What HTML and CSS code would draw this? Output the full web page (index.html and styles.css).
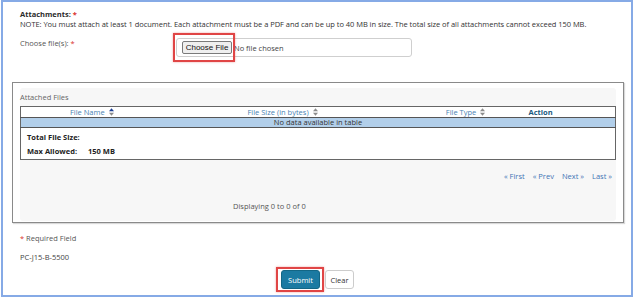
FILE: index.html
```html
<!DOCTYPE html>
<html lang="en">
<head>
    <meta charset="UTF-8">
    <meta name="viewport" content="width=device-width, initial-scale=1.0">
    <title>Attachments</title>
    <link rel="stylesheet" href="styles.css">
</head>
<body>
    <div class="frame">
        <div class="form">
            <div class="field-title">Attachments: <span class="req">*</span></div>
            <div class="note">NOTE: You must attach at least 1 document. Each attachment must be a PDF and can be up to 40 MB in size. The total size of all attachments cannot exceed 150 MB.</div>
            <div class="choose-row">
                <label class="choose-label">Choose file(s): <span class="req">*</span></label>
                <div class="file-input">
                    <span class="file-btn">Choose File</span>
                    <span class="file-status">No file chosen</span>
                    <span class="hl-file"></span>
                </div>
            </div>
        </div>

        <div class="files-box">
            <div class="files-panel">
                <div class="caption">Attached Files</div>
                <table class="files-table">
                    <colgroup>
                        <col class="c1"><col class="c2"><col class="c3"><col class="c4">
                    </colgroup>
                    <thead>
                        <tr>
                            <th>File Name <svg class="sort" viewBox="0 0 6 9"><path d="M3 0 L6 3.5 H0 Z" fill="#1b3f94"/><path d="M0 5.5 H6 L3 9 Z" fill="#8c8c8c"/></svg></th>
                            <th>File Size (in bytes) <svg class="sort" viewBox="0 0 6 9"><path d="M3 0 L6 3.5 H0 Z" fill="#8c8c8c"/><path d="M0 5.5 H6 L3 9 Z" fill="#8c8c8c"/></svg></th>
                            <th>File Type <svg class="sort" viewBox="0 0 6 9"><path d="M3 0 L6 3.5 H0 Z" fill="#8c8c8c"/><path d="M0 5.5 H6 L3 9 Z" fill="#8c8c8c"/></svg></th>
                            <th class="action">Action</th>
                        </tr>
                    </thead>
                    <tbody>
                        <tr class="empty"><td colspan="4">No data available in table</td></tr>
                        <tr class="totals">
                            <td colspan="4">
                                <div class="total-line"><b>Total File Size:</b></div>
                                <div class="total-line"><b>Max Allowed:</b><span class="max">150 MB</span></div>
                            </td>
                        </tr>
                    </tbody>
                </table>
                <div class="pager">
                    <a>« First</a><a>« Prev</a><a>Next »</a><a>Last »</a>
                </div>
                <div class="displaying">Displaying 0 to 0 of 0</div>
            </div>
        </div>

        <div class="form footer">
            <div class="required"><span class="req">*</span> Required Field</div>
            <div class="code">PC-J15-B-5500</div>
            <div class="actions">
                <span class="hl-submit"><button class="btn-submit">Submit</button></span>
                <button class="btn-clear">Clear</button>
            </div>
        </div>
    </div>
</body>
</html>
```

FILE: styles.css
```css
*{
    margin: 0;
    padding: 0;
    box-sizing: border-box;
}
body{
    background: #ffffff;
    font-family: "Open Sans", "Noto Sans", sans-serif;
    font-size: 7.5px;
    line-height: 10px;
    color: #333333;
}
.frame{
    width: 632px;
    height: 297px;
    margin-left: 1px;
    border: 2px solid #86aae6;
}
.form{
    padding: 7px 0 0 17px;
}
.req{
    color: #d9302c;
}
.field-title{
    font-weight: bold;
    color: #2b2b2b;
}
.note{
    white-space: nowrap;
    letter-spacing: -0.04px;
}
.choose-row{
    display: flex;
    margin-top: 9px;
}
.choose-label{
    width: 156px;
    color: #555555;
}
.file-input{
    position: relative;
    display: flex;
    align-items: center;
    width: 236px;
    height: 19px;
    padding-left: 5px;
    border: 1px solid #cfcfcf;
    border-radius: 3px;
}
.file-btn{
    display: inline-block;
    width: 50px;
    height: 13px;
    line-height: 11px;
    text-align: center;
    font-family: "Liberation Sans", Arial, sans-serif;
    font-size: 8px;
    color: #111111;
    background: #efefef;
    border: 1px solid #7a7a7a;
    border-radius: 2px;
}
.file-status{
    margin-left: 2px;
    color: #444444;
}
.hl-file{
    position: absolute;
    left: -4px;
    top: -6px;
    width: 62px;
    height: 29px;
    border: 2px solid #e04545;
    box-shadow: 0 0 2px rgba(224, 69, 69, 0.5);
}
.files-box{
    width: 612px;
    height: 141px;
    margin: 25px 0 0 9px;
    padding: 5px 7px 0 7px;
    border: 1px solid #8a8a8a;
    box-shadow: 1px 1px 1px rgba(0, 0, 0, 0.15);
}
.files-panel{
    height: 133px;
    padding-top: 4px;
    background: #f7f7f7;
    border-radius: 3px;
}
.caption{
    color: #666666;
}
.files-table{
    width: 595px;
    margin-top: 4px;
    border-collapse: collapse;
    table-layout: fixed;
    border: 1px solid #666666;
    background: #ffffff;
}
.c1{ width: 142px; }
.c2{ width: 240px; }
.c3{ width: 126px; }
.c4{ width: 87px; }
.files-table th{
    height: 10px;
    font-weight: normal;
    color: #4a83b3;
    text-align: center;
    border-bottom: 1px solid #555555;
    white-space: nowrap;
}
.files-table th.action{
    text-align: left;
    font-weight: bold;
    color: #1a5a80;
}
.sort{
    width: 5px;
    height: 8px;
    margin-left: 2px;
    vertical-align: -1px;
}
.empty td{
    height: 9px;
    line-height: 9px;
    text-align: center;
    background: #b2cfea;
    border-bottom: 1px solid #555555;
}
.totals td{
    padding: 4px 0 3px 6px;
}
.total-line + .total-line{
    margin-top: 4px;
}
.total-line b{
    color: #222222;
}
.max{
    margin-left: 11px;
    font-weight: bold;
    color: #222222;
}
.pager{
    display: flex;
    justify-content: flex-end;
    gap: 8px;
    margin-top: 11px;
    padding-right: 4px;
}
.pager a{
    color: #3f74b5;
}
.displaying{
    margin: 20px 0 0 213px;
    color: #555555;
}
.footer{
    padding-top: 10px;
}
.required{
    color: #555555;
}
.code{
    margin-top: 9px;
    color: #444444;
}
.actions{
    display: flex;
    align-items: center;
    margin: 5px 0 0 256px;
}
.hl-submit{
    display: inline-block;
    padding: 1px 2px 1px 3px;
    border: 2px solid #e04545;
    box-shadow: 0 0 2px rgba(224, 69, 69, 0.5);
}
.btn-submit,
.btn-clear{
    display: block;
    height: 19px;
    font-family: "Open Sans", "Noto Sans", sans-serif;
    font-size: 7.5px;
    border-radius: 3px;
}
.btn-submit{
    width: 39px;
    color: #ffffff;
    background: #1b7aa2;
    border: 1px solid #136685;
}
.btn-clear{
    width: 29px;
    margin-left: 1px;
    color: #333333;
    background: #ffffff;
    border: 1px solid #cccccc;
}
```
